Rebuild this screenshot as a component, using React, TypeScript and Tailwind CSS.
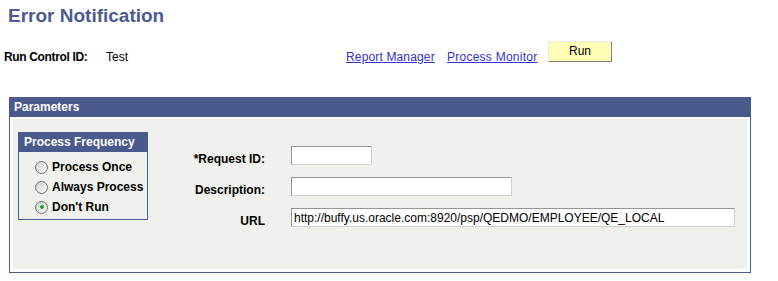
import React from 'react';

function Radio({ label, checked }: { label: string; checked?: boolean }) {
    return (
        <div className="flex items-center h-[20px]">
            <span className="ml-[16px] w-[13px] h-[13px] rounded-full border border-[#6f6f6f] bg-linear-to-br from-[#cfcfcf] to-white flex items-center justify-center">
                {checked && <span className="w-[4px] h-[4px] rounded-full bg-[#22a022]"></span>}
            </span>
            <span className="ml-[4px] font-bold leading-[14px]">{label}</span>
        </div>
    );
}

function Field({ label, width, value }: { label: string; width: string; value?: string }) {
    return (
        <div className="flex items-start h-[19px]">
            <span className="w-[117px] text-right font-bold leading-[14px] mt-[6px]">{label}</span>
            <input
                readOnly
                value={value ?? ''}
                className={`ml-[26px] h-[19px] ${width} bg-white border border-t-[#959595] border-l-[#959595] border-b-[#d0d0d0] border-r-[#d0d0d0] pl-[2px] text-[12px] text-black outline-none`}
            />
        </div>
    );
}

export default function App() {
    return (
        <div className="w-[778px] h-[281px] bg-white text-[12px] text-black font-['Liberation_Sans',Arial,sans-serif]">
            <h1 className="pl-[8px] pt-[4px] text-[19px] font-bold leading-[24px] text-[#4b5b8f]">Error Notification</h1>

            <div className="flex items-start h-[22px] mt-[13px] pl-[4px]">
                <span className="w-[102px] mt-[9px] leading-[14px] font-bold tracking-[-0.35px]">Run Control ID:</span>
                <span className="w-[240px] mt-[9px] leading-[14px]">Test</span>
                <span className="w-[101px] mt-[9px] leading-[14px]">
                    <a href="#" className="text-[#3333cc] underline tracking-[0.15px]">Report Manager</a>
                </span>
                <span className="w-[101px] mt-[9px] leading-[14px]">
                    <a href="#" className="text-[#3333cc] underline tracking-[0.25px]">Process Monitor</a>
                </span>
                <button className="w-[64px] h-[21px] bg-[#ffffb8] border border-t-[#ececec] border-l-[#ececec] border-b-[#808080] border-r-[#808080] text-[12px] leading-[19px]">
                    Run
                </button>
            </div>

            <div className="ml-[9px] mt-[34px] w-[742px] border border-[#4a5a8c] bg-white">
                <div className="h-[19px] bg-[#4a5a8c] text-white font-bold leading-[19px] pl-[4px]">Parameters</div>
                <div className="mx-[3px] mt-[2px] mb-[3px] h-[150px] bg-[#f0f1ec] flex items-start">
                    <div className="ml-[5px] mt-[13px] w-[130px] border border-[#4a5a8c]">
                        <div className="h-[19px] bg-[#4a5a8c] text-white font-bold leading-[18px] pl-[5px]">Process Frequency</div>
                        <div className="pt-[5px] pb-[2px]">
                            <Radio label="Process Once" />
                            <Radio label="Always Process" />
                            <Radio label="Don't Run" checked />
                        </div>
                    </div>
                    <div className="mt-[27px] flex flex-col gap-[12px]">
                        <Field label="*Request ID:" width="w-[81px]" />
                        <Field label="Description:" width="w-[221px]" />
                        <Field label="URL" width="w-[444px]" value="http://buffy.us.oracle.com:8920/psp/QEDMO/EMPLOYEE/QE_LOCAL" />
                    </div>
                </div>
            </div>
        </div>
    );
}
